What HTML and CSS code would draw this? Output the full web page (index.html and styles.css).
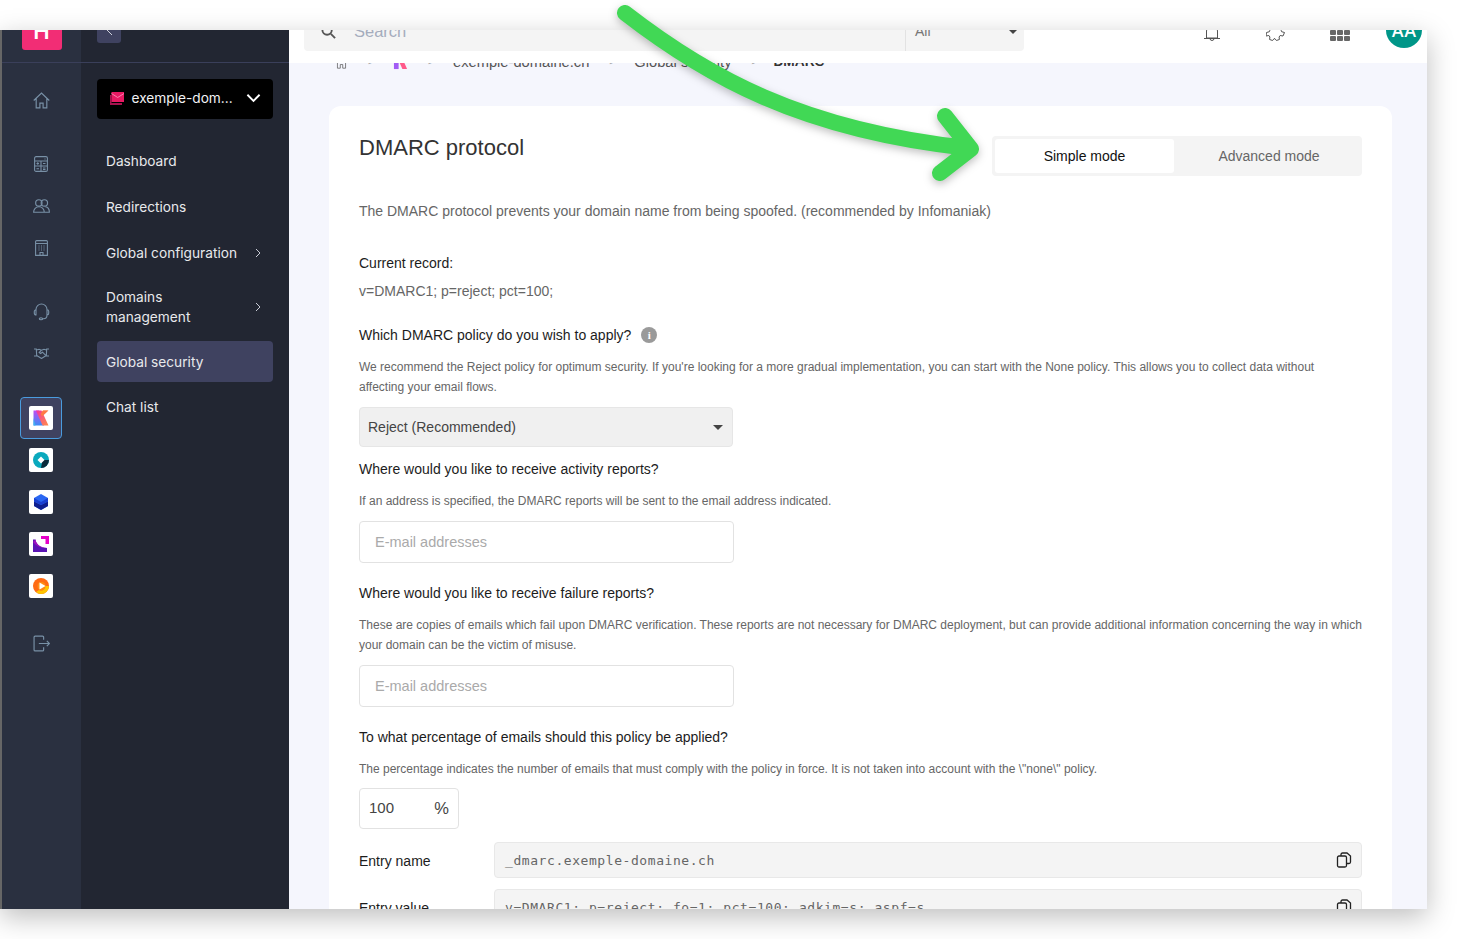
FILE: index.html
```html
<!DOCTYPE html>
<html lang="en">
<head>
    <meta charset="UTF-8">
    <meta name="viewport" content="width=device-width, initial-scale=1.0">
    <title>DMARC protocol</title>
    <link rel="stylesheet" href="styles.css">
</head>
<body>

<div class="window">

    <!-- Product rail -->
    <nav class="rail">
        <div class="rail-top"><span class="brand">H</span></div>
        <div class="rail-icons">
            <svg class="rail-icon home" viewBox="0 0 16 16"><path d="M.7 8L8 1l7.300 7M3 6v9h3.500v-4.500h3V15H13V6"/></svg>
            <svg class="rail-icon calc" viewBox="0 0 14 16"><rect x=".6" y=".6" width="12.800" height="14.800" rx="1.500"/><path d="M.6 5h12.800M.6 10h12.800M7 5v10.400M2.500 7.500h2.500M3.750 6.300v2.400M9 7.500h2.500M2.500 12.700h2.500M9 12h2.500M9 13.500h2.500M10.500 3h1"/></svg>
            <svg class="rail-icon users" viewBox="0 0 16 13"><circle cx="5.500" cy="3.600" r="3"/><circle cx="10.700" cy="3.600" r="3"/><path d="M.6 12.400c0-3 2-5.200 5-5.200s5 2.200 5 5.200zM11.600 7.200c2.200.2 3.800 2.300 3.800 5.200h-4.800"/></svg>
            <svg class="rail-icon building" viewBox="0 0 13 16"><path d="M.6 15.400V1.600a1 1 0 011-1h9.800a1 1 0 011 1v13.800zM.6 3.500h11.800M5 15.400V12.500h3v2.900M3.500 6h1M6 6h1M8.500 6h1M3.500 8h1M6 8h1M8.500 8h1M3.500 10h1M6 10h1M8.500 10h1"/></svg>
            <svg class="rail-icon headset" viewBox="0 0 16 18"><path d="M2.500 10V6.500a5.500 5.500 0 0111 0V10M2.500 6.800A1.700 1.700 0 00.8 8.500v1.800a1.700 1.700 0 001.700 1.700zM13.500 6.800a1.700 1.700 0 011.700 1.700v1.800a1.700 1.700 0 01-1.700 1.700zM13.500 12c0 2.500-1.500 3.800-3.500 3.800H9"/><ellipse cx="7.500" cy="15.800" rx="1.700" ry="1"/></svg>
            <svg class="rail-icon hands" viewBox="0 0 16 11"><path d="M.5 1h2.300l.4 7H.5M15.500 1h-2.300l-.4 7h2.700M3 2l2.500-.7 2.500.9 2.500-.9 2.500.7M3.200 7.500L8 10.500l4.800-3M8 2.200L5.700 4.500l1.300 1 2-1.300 3 3"/></svg>
        </div>
        <div class="app-list">
            <a class="app app-active"><span class="app-tile">
                <svg viewBox="0 0 16 16">
                    <defs>
                        <linearGradient id="k-stem" x1="0" y1="0" x2="0" y2="1"><stop offset="0" stop-color="#c04df2"/><stop offset="1" stop-color="#3d8cf5"/></linearGradient>
                        <linearGradient id="k-arm" x1="0" y1="0" x2="1" y2="1"><stop offset="0" stop-color="#f5359e"/><stop offset="1" stop-color="#ff8c4a"/></linearGradient>
                    </defs>
                    <path fill="#ff9a5a" d="M9 6.500L15 .5v0h-5L6.500 5z"/>
                    <path fill="url(#k-stem)" d="M.5.5h5.500L11 15.500H.5z"/>
                    <path fill="url(#k-arm)" d="M3 .5h5.500l7 15h-6z"/>
                    <path fill="#ff7a45" d="M9 6.500L15.500.5H10L7.500 4z"/>
                    <path fill="#3db2f0" d="M.5 8l2 7.500h-2z"/>
                </svg>
            </span></a>
            <a class="app"><span class="app-tile">
                <svg viewBox="0 0 16 16"><circle cx="8" cy="8" r="8" fill="#0aa9bd"/><path fill="#0b2a3a" d="M8 16a8 8 0 008-8H9.500z"/><path fill="#fff" d="M8 4.500L11.500 8 8 11.500 4.500 8z"/></svg>
            </span></a>
            <a class="app"><span class="app-tile">
                <svg viewBox="0 0 16 16"><path fill="#2a67f2" d="M8 0l7 4v8l-7 4-7-4V4z"/><path fill="#0f1f8f" d="M1 7.500L8 11l7-3.500V12l-7 4-7-4z"/><path fill="#1a3fd0" d="M1 4l7 4 7-4v3.500L8 11 1 7.500z"/></svg>
            </span></a>
            <a class="app"><span class="app-tile">
                <svg viewBox="0 0 16 16"><path fill="#5a14b4" d="M0 3.500h2.500c.5 4.500 5 8.500 11.500 8.500v4H0z"/><path fill="#e600c8" d="M8 0h8v8h-3.500V3H8z"/><path fill="#a010c0" d="M2.500 3.500c.5 4.500 5 8.500 11.500 8.500 -5 .5-11-2-14-6z"/></svg>
            </span></a>
            <a class="app"><span class="app-tile">
                <svg viewBox="0 0 16 16"><circle cx="8" cy="8" r="8" fill="#ff6a13"/><path fill="#ffc400" d="M16 8a8 8 0 01-8 8 8 8 0 01-5-2l3-2a4 4 0 006-4z"/><circle cx="8.500" cy="8" r="4" fill="#ff8a13"/><path fill="#fff" d="M6.500 4.500L12.500 8l-6 3.500z"/></svg>
            </span></a>
        </div>
        <svg class="rail-icon logout" viewBox="0 0 16 16"><path d="M10 4.500V2a1 1 0 00-1-1H2a1 1 0 00-1 1v12a1 1 0 001 1h7a1 1 0 001-1v-2.500M5.500 8h10M13 5.500L15.500 8 13 10.500"/></svg>
    </nav>

    <!-- Section sidebar -->
    <aside class="sidebar">
        <div class="sidebar-top"><span class="collapse"><svg viewBox="0 0 8 12"><path d="M1 0l5 5"/></svg></span></div>
        <div class="sidebar-body">
            <button class="domain-select">
                <svg class="domain-icon" viewBox="0 0 14 13"><path fill="#a8124f" d="M0 3h1.500v8H12v2H0z"/><path fill="#e81a63" d="M1.500 0H14v10H1.500z"/><path fill="none" stroke="#ff9cc2" stroke-width=".8" d="M1.500 1.500L7.700 5.500 14 1.500"/></svg>
                <span class="domain-name">exemple-dom...</span>
                <svg class="domain-caret" viewBox="0 0 16 10"><path d="M1.500 1.500L8 8l6.500-6.500"/></svg>
            </button>
            <ul class="menu">
                <li><a>Dashboard</a></li>
                <li><a>Redirections</a></li>
                <li><a>Global configuration <svg class="chev" viewBox="0 0 6 10"><path d="M1 1l4 4-4 4"/></svg></a></li>
                <li><a class="two-lines"><span>Domains<br>management</span> <svg class="chev" viewBox="0 0 6 10"><path d="M1 1l4 4-4 4"/></svg></a></li>
                <li><a class="active">Global security</a></li>
                <li><a>Chat list</a></li>
            </ul>
        </div>
    </aside>

    <div class="main">
        <header class="topbar">
            <div class="search">
                <svg class="search-icon" viewBox="0 0 16 16"><circle cx="6.500" cy="6.500" r="5"/><path d="M10.500 10.500L15 15"/></svg>
                <span class="search-text">Search</span>
                <span class="search-scope">All<i class="caret"></i></span>
            </div>
            <div class="top-actions">
                <svg class="top-icon bell" viewBox="0 0 18 18"><path d="M3.500 15V8a5.500 5.500 0 0111 0v7zM1 15.500h16M7 15.500a2 2 0 004 0"/></svg>
                <svg class="top-icon gear" viewBox="0 0 19 18"><path d="M7.500 1h4l.5 2.500 2.500-1 2.500 3-2 1.800.6 1.400 2.900.8-1.500 3.500-2.900-.5-1 1.500.3 2.500-3 1-1.400-1.800h-1l-1.400 1.800-3-1 .3-2.500-1-1.500-2.900.5L.5 9.500l2.900-.8.600-1.400-2-1.800 2.500-3 2.500 1z"/></svg>
                <span class="apps-grid"><i></i><i></i><i></i><i></i><i></i><i></i></span>
                <span class="avatar">AA</span>
            </div>
        </header>

        <div class="content">
            <div class="breadcrumb">
                <svg class="crumb-home" viewBox="0 0 16 16"><path d="M1 8l7-7 7 7M3 6.500V15h3.500v-4.500h3V15H13V6.500"/></svg>
                <span class="sep">&gt;</span>
                <svg class="crumb-logo" viewBox="0 0 16 16"><path fill="#a25cf5" d="M1 1h5v14H1z"/><path fill="#ff5a8a" d="M4 1h5l6 14h-5z"/></svg>
                <span class="sep">&gt;</span>
                <span>exemple-domaine.ch</span>
                <span class="sep">&gt;</span>
                <span>Global security</span>
                <span class="sep">&gt;</span>
                <strong>DMARC</strong>
            </div>

            <section class="card">
                <div class="card-head">
                    <h1>DMARC protocol</h1>
                    <div class="mode-switch">
                        <span class="mode mode-on">Simple mode</span>
                        <span class="mode mode-off">Advanced mode</span>
                    </div>
                </div>

                <p class="lead">The DMARC protocol prevents your domain name from being spoofed. (recommended by Infomaniak)</p>

                <h2 class="record-title">Current record:</h2>
                <p class="record">v=DMARC1; p=reject; pct=100;</p>

                <h2 class="q q-policy">Which DMARC policy do you wish to apply? <span class="info">i</span></h2>
                <p class="hint">We recommend the Reject policy for optimum security. If you're looking for a more gradual implementation, you can start with the None policy. This allows you to collect data without affecting your email flows.</p>
                <div class="select">Reject (Recommended)<i class="caret"></i></div>

                <h2 class="q q-activity">Where would you like to receive activity reports?</h2>
                <p class="hint">If an address is specified, the DMARC reports will be sent to the email address indicated.</p>
                <div class="text-input">E-mail addresses</div>

                <h2 class="q q-failure">Where would you like to receive failure reports?</h2>
                <p class="hint">These are copies of emails which fail upon DMARC verification. These reports are not necessary for DMARC deployment, but can provide additional information concerning the way in which your domain can be the victim of misuse.</p>
                <div class="text-input">E-mail addresses</div>

                <h2 class="q q-percent">To what percentage of emails should this policy be applied?</h2>
                <p class="hint">The percentage indicates the number of emails that must comply with the policy in force. It is not taken into account with the \"none\" policy.</p>
                <div class="percent"><span class="percent-value">100</span><span class="percent-sign">%</span></div>

                <div class="entry">
                    <label>Entry name</label>
                    <div class="entry-value"><code>_dmarc.exemple-domaine.ch</code><svg class="copy" viewBox="0 0 16 16"><rect x="1.500" y="4" width="9" height="11" rx="1.500"/><path d="M5 4V2.500A1.500 1.500 0 016.500 1H11l3.500 3v6a1.500 1.500 0 01-1.500 1.500h-2.500"/></svg></div>
                </div>
                <div class="entry">
                    <label>Entry value</label>
                    <div class="entry-value"><code>v=DMARC1; p=reject; fo=1; pct=100; adkim=s; aspf=s</code><svg class="copy" viewBox="0 0 16 16"><rect x="1.500" y="4" width="9" height="11" rx="1.500"/><path d="M5 4V2.500A1.500 1.500 0 016.500 1H11l3.500 3v6a1.500 1.500 0 01-1.500 1.500h-2.500"/></svg></div>
                </div>
            </section>
        </div>
    </div>
</div>

<!-- Green annotation arrow -->
<svg class="arrow" viewBox="0 0 1000 200" width="1000" height="200">
    <path d="M625 13C705 75 800 130 968 148M945 116L971 149L940 173"/>
</svg>

</body>
</html>
```

FILE: styles.css
```css
* {
    box-sizing: border-box;
}
html, body {
    margin: 0;
    height: 100%;
    background-color: #fff;
    overflow: hidden;
}
body {
    padding-top: 30px;
    font-family: "Liberation Sans", Arial, sans-serif;
    color: #333;
}
.window {
    display: flex;
    width: 1427px;
    height: 879px;
    overflow: hidden;
    box-shadow: 0 8px 26px rgba(0, 0, 0, 0.26);
}

/* Rail */
.rail {
    flex: 0 0 81px;
    display: flex;
    flex-direction: column;
    align-items: center;
    background-color: #2a3040;
    border-left: 2px solid #666;
    padding-right: 1px;
}
.rail-top {
    align-self: stretch;
    height: 33px;
    margin-right: -1px;
    display: flex;
    justify-content: center;
    align-items: flex-end;
    border-bottom: 1px solid #3a3f5a;
}
.brand {
    width: 40px;
    height: 40px;
    margin-bottom: 12px;
    padding-bottom: 3px;
    flex-shrink: 0;
    background-color: #f22d75;
    border-radius: 3px;
    color: #fff;
    font: 600 22px/32px Inter, sans-serif;
    text-align: center;
    display: flex;
    align-items: flex-end;
    justify-content: center;
}
.rail-icons {
    display: flex;
    flex-direction: column;
    align-items: center;
}
.rail-icon {
    display: block;
    fill: none;
    stroke: #7890a6;
    stroke-width: 1.100;
}
.home { width: 17px; height: 17px; margin-top: 29px; }
.calc { width: 14px; height: 16px; margin-top: 47px; }
.users { width: 17px; height: 14px; margin-top: 27px; }
.building { width: 13px; height: 16px; margin-top: 27px; }
.headset { width: 17px; height: 18px; margin-top: 47px; }
.hands { width: 17px; height: 11px; margin-top: 27px; }
.logout { width: 17px; height: 17px; margin-top: 28px; }
.app-list {
    margin-top: 38px;
    display: flex;
    flex-direction: column;
    align-items: center;
}
.app {
    width: 42px;
    height: 42px;
    display: flex;
    align-items: center;
    justify-content: center;
    border-radius: 4px;
}
.app-active {
    background-color: #3f4260;
    border: 1px solid #4a9cdf;
}
.app-tile {
    width: 24px;
    height: 24px;
    padding: 4px;
    background-color: #fff;
    border-radius: 2px;
}
.app-tile svg {
    display: block;
    width: 16px;
    height: 16px;
}

/* Sidebar */
.sidebar {
    flex: 0 0 208px;
    background-color: #222632;
    font-family: Inter, sans-serif;
    color: #e8e9ec;
}
.sidebar-top {
    height: 33px;
    padding-left: 16px;
    border-bottom: 1px solid #3a3f5a;
}
.collapse {
    display: block;
    width: 24px;
    height: 13px;
    background-color: #3f4260;
    border-radius: 0 0 3px 3px;
}
.collapse svg {
    display: block;
    width: 8px;
    height: 12px;
    margin-left: 9px;
    fill: none;
    stroke: #cfd2dc;
}
.sidebar-body {
    padding: 16px 16px 0;
}
.domain-select {
    width: 100%;
    height: 40px;
    padding: 0 12px 2px 12.500px;
    display: flex;
    align-items: center;
    background-color: #000;
    border: none;
    border-radius: 4px;
    color: #f2f2f4;
    font: 13.700px Inter, sans-serif;
}
.domain-icon {
    width: 14px;
    height: 13px;
    margin-right: 8px;
}
.domain-name {
    flex: 1;
    text-align: left;
}
.domain-caret {
    width: 15px;
    height: 10px;
    fill: none;
    stroke: #fff;
    stroke-width: 2;
}
.menu {
    list-style: none;
    margin: 21px 0 0;
    padding: 0;
    font-size: 13.700px;
    line-height: 20px;
}
.menu li {
    margin-bottom: 4px;
}
.menu a {
    display: flex;
    align-items: center;
    justify-content: space-between;
    min-height: 42px;
    padding: 0 12px 0 9px;
    border-radius: 4px;
}
.menu .two-lines {
    min-height: 59px;
    padding-bottom: 2px;
}
.menu .active {
    min-height: 41px;
    background-color: #3f4260;
}
.chev {
    width: 6px;
    height: 10px;
    fill: none;
    stroke: #c9ccd6;
}

/* Top bar */
.main {
    flex: 1;
    min-width: 0;
    display: flex;
    flex-direction: column;
    background-color: #f5f6fd;
}
.topbar {
    position: relative;
    z-index: 1;
    flex: 0 0 33px;
    min-height: 0;
    display: flex;
    align-items: flex-end;
    justify-content: space-between;
    padding: 0 5px 12px 15px;
    background-color: #fff;
}
.search {
    width: 720px;
    height: 40px;
    flex-shrink: 0;
    display: flex;
    align-items: center;
    padding-left: 17px;
    background-color: #f4f4f4;
    border-radius: 0 0 4px 4px;
    font-size: 16.500px;
}
.search-icon {
    width: 15px;
    height: 15px;
    fill: none;
    stroke: #555;
    stroke-width: 2;
}
.search-text {
    flex: 1;
    margin-left: 18px;
    color: #a5acbd;
}
.search-scope {
    width: 119px;
    height: 40px;
    display: flex;
    align-items: center;
    justify-content: space-between;
    padding: 0 6px 0 9px;
    border-left: 1px solid #e2e2e2;
    color: #777;
    font-size: 14px;
}
.caret {
    width: 0;
    height: 0;
    border: 5px solid transparent;
    border-top: 5px solid #444;
    border-bottom: 0;
}
.top-actions {
    display: flex;
    align-items: flex-end;
}
.top-icon {
    flex-shrink: 0;
    margin-bottom: 10px;
    fill: none;
    stroke: #555;
}
.bell {
    width: 18px;
    height: 18px;
    margin-right: 45px;
}
.gear {
    width: 19px;
    height: 18px;
    margin-right: 45px;
}
.apps-grid {
    display: grid;
    grid-template-columns: repeat(3, 6px);
    gap: 1px;
    margin-right: 36px;
    margin-bottom: 10px;
}
.apps-grid i {
    height: 5px;
    background-color: #666;
    border-radius: 1px;
}
.avatar {
    width: 36px;
    height: 36px;
    margin-bottom: 3px;
    border-radius: 50%;
    background-color: #009688;
    color: #fff;
    font: 500 17.500px/38px Inter, sans-serif;
    text-align: center;
    flex-shrink: 0;
}

/* Breadcrumb */
.content {
    flex: 1;
    min-height: 0;
    padding: 0 35px 0 40px;
}
.breadcrumb {
    height: 53px;
    margin-top: -10px;
    padding: 0 0 0 6px;
    display: flex;
    align-items: flex-start;
    gap: 20px;
    color: #555;
    font-size: 14.700px;
    line-height: 18px;
}
.breadcrumb strong {
    margin-left: -3px;
    color: #333;
    font-size: 13.700px;
}
.sep {
    width: 5px;
    color: #999;
    font-size: 9px;
}
.crumb-home {
    width: 13px;
    height: 15px;
    margin-top: 2px;
    fill: none;
    stroke: #666;
}
.crumb-logo {
    width: 15px;
    height: 15px;
    margin-top: 2px;
}

/* Card */
.card {
    height: 900px;
    padding: 30px 30px 0;
    background-color: #fff;
    border-radius: 12px 12px 0 0;
    font-size: 14px;
}
.card-head {
    display: flex;
    justify-content: space-between;
    height: 40px;
}
h1 {
    margin: 0;
    font-size: 22px;
    font-weight: 400;
    line-height: 24px;
    color: #333;
}
.mode-switch {
    display: flex;
    width: 370px;
    height: 40px;
    padding: 3px;
    background-color: #f4f4f4;
    border-radius: 4px;
}
.mode {
    flex: 1;
    display: flex;
    align-items: center;
    justify-content: center;
    color: #666;
    border-radius: 3px;
}
.mode-on {
    flex: 0 0 179px;
    background-color: #fff;
    color: #111;
}
.mode-off {
    padding-left: 5px;
}
.lead {
    margin: 26px 0 0;
    color: #666;
    line-height: 18px;
}
h2 {
    margin: 0;
    font-size: 14px;
    font-weight: 400;
    color: #1c1c1c;
    line-height: 18px;
}
.record-title {
    margin-top: 34px;
}
.record {
    margin: 10px 0 0;
    color: #666;
    line-height: 18px;
}
.q-policy {
    display: flex;
    align-items: center;
    gap: 10px;
    margin-top: 26px;
}
.info {
    width: 16px;
    height: 16px;
    border-radius: 50%;
    background-color: #9a9a9a;
    color: #fff;
    font: bold 11px/16px "Liberation Serif", serif;
    text-align: center;
}
.hint {
    margin: 13px 0 0;
    color: #666;
    font-size: 12px;
    line-height: 20px;
}
.select {
    width: 374px;
    height: 40px;
    margin-top: 10px;
    padding: 0 9px 0 8px;
    display: flex;
    align-items: center;
    justify-content: space-between;
    background-color: #f0f0f0;
    border: 1px solid #e6e6e6;
    border-radius: 4px;
    color: #444;
}
.q-activity {
    margin-top: 13px;
}
.text-input {
    width: 375px;
    height: 42px;
    margin-top: 10px;
    padding: 0 15px;
    display: flex;
    align-items: center;
    border: 1px solid #e2e2e2;
    border-radius: 4px;
    color: #aaa;
    font-size: 14.500px;
}
.q-failure, .q-percent {
    margin-top: 21px;
}
.percent {
    width: 100px;
    height: 41px;
    margin-top: 9px;
    padding: 0 9px;
    display: flex;
    justify-content: space-between;
    align-items: center;
    border: 1px solid #e2e2e2;
    border-radius: 4px;
    color: #444;
    font-size: 15px;
}
.percent-value {
    padding-bottom: 3px;
}
.percent-sign {
    font-size: 16.500px;
}
.entry {
    display: flex;
    align-items: center;
    margin-top: 13px;
    color: #1c1c1c;
}
.entry + .entry {
    margin-top: 11px;
}
.entry label {
    flex: 0 0 135px;
    padding-top: 2px;
}
.entry-value {
    flex: 1;
    height: 36px;
    padding: 0 9px 0 10px;
    display: flex;
    align-items: center;
    justify-content: space-between;
    background-color: #f4f4f4;
    border: 1px solid #e8e8e8;
    border-radius: 4px;
}
code {
    font-family: "DejaVu Sans Mono", monospace;
    font-size: 13px;
    letter-spacing: 0.570px;
    color: #666;
}
.copy {
    width: 16px;
    height: 16px;
    fill: none;
    stroke: #222;
    stroke-width: 1.300;
}

/* Annotation */
.arrow {
    position: absolute;
    z-index: 2;
    top: 0;
    left: 0;
    filter: drop-shadow(0 3px 4px rgba(0, 0, 0, 0.25));
}
.arrow path {
    fill: none;
    stroke: #41d855;
    stroke-width: 16;
    stroke-linecap: round;
    stroke-linejoin: round;
}
```
